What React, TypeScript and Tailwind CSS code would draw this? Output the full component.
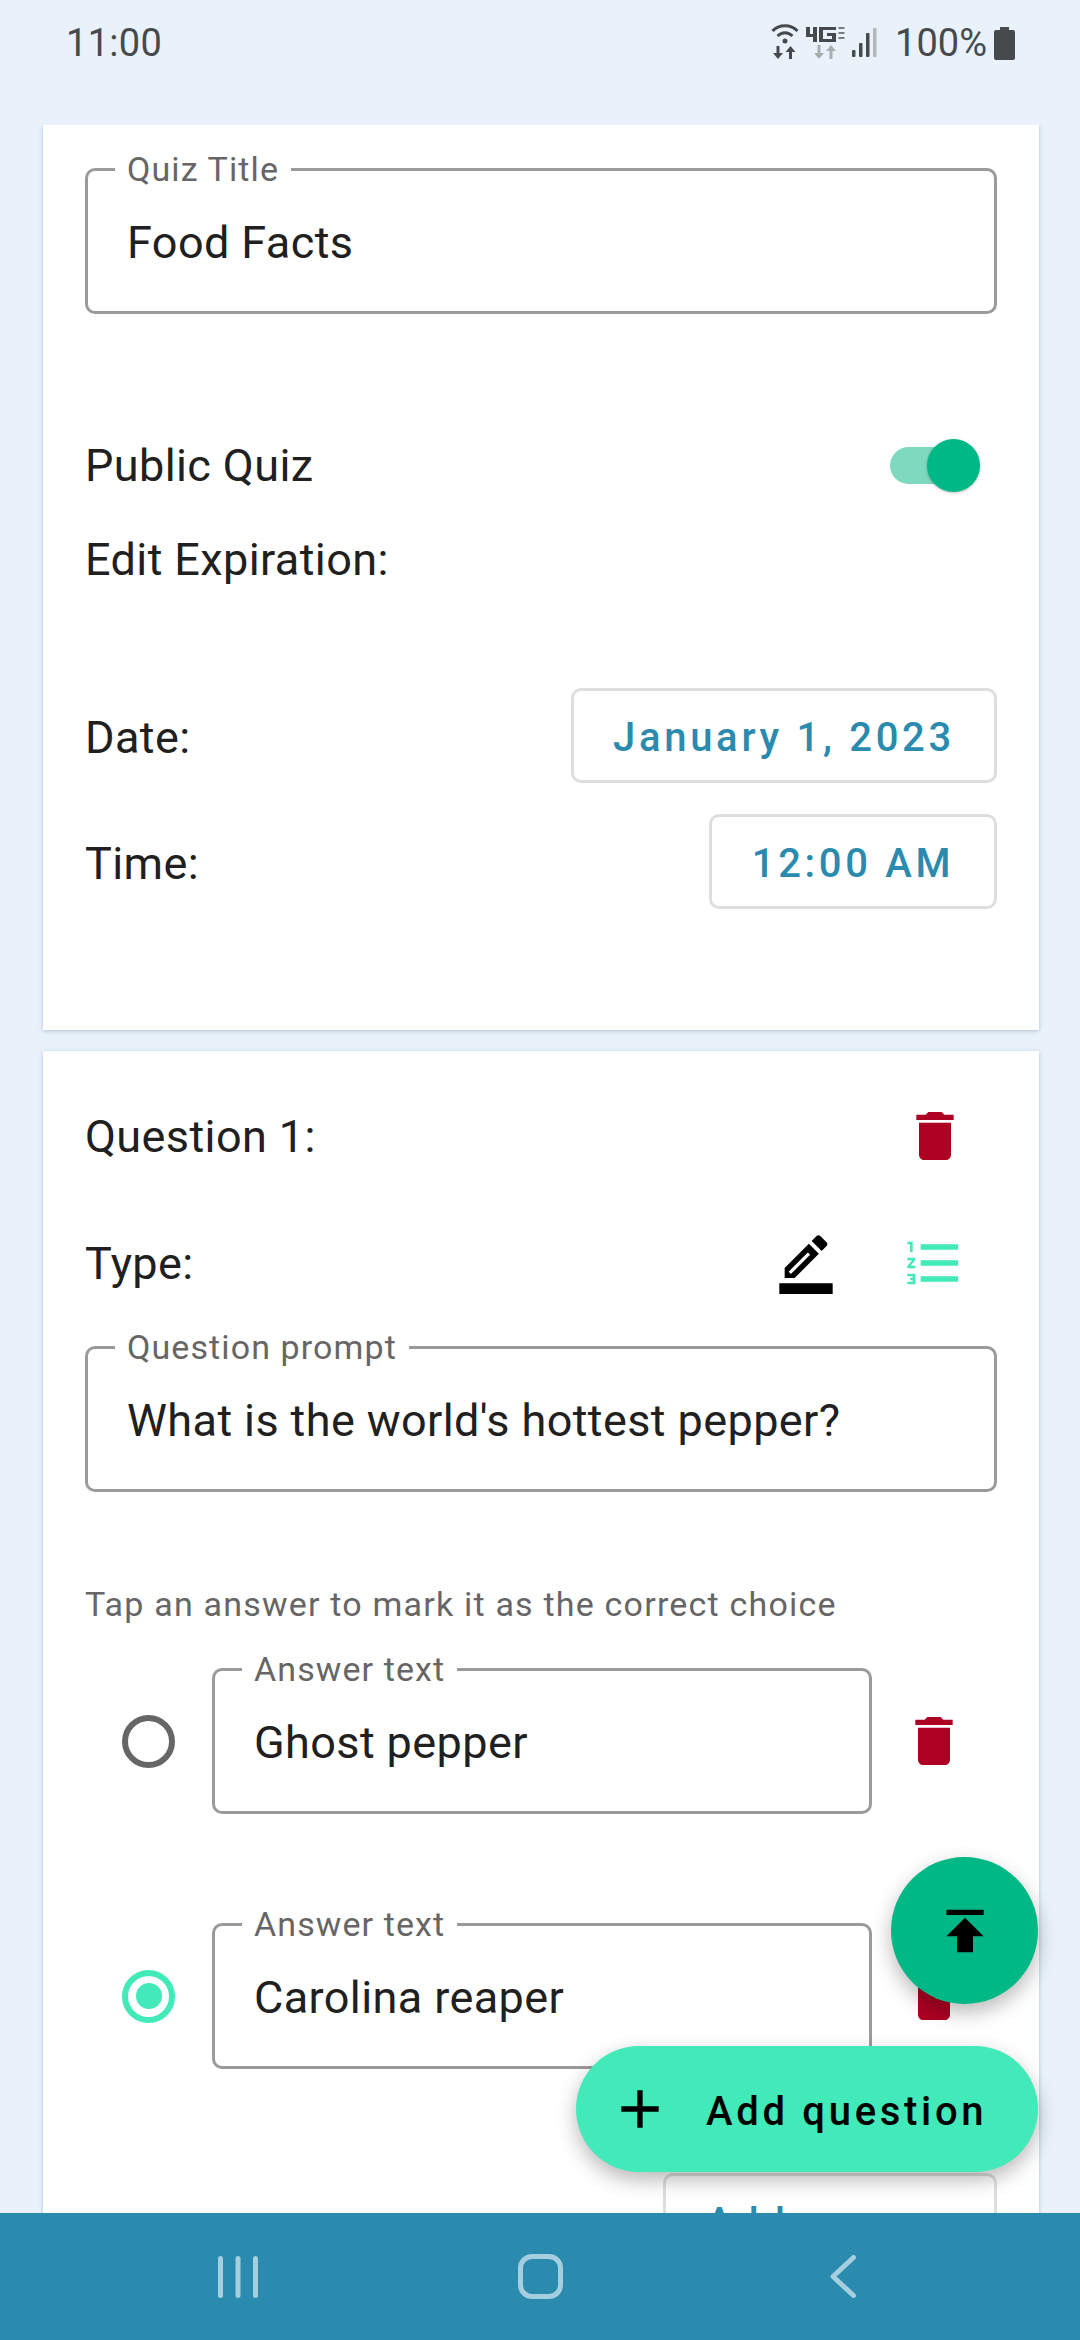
import React from 'react';

const TRASH = 'M6 19c0 1.1.9 2 2 2h8c1.1 0 2-.9 2-2V7H6v12zM19 4h-3.5l-1-1h-5l-1 1H5v2h14V4z';

const Icon: React.FC<{ d: string; className?: string }> = ({ d, className }) => (
  <svg viewBox="0 0 24 24" className={`w-[64px] h-[64px] shrink-0 fill-current ${className ?? ''}`}>
    <path d={d} />
  </svg>
);

// outlined text field with the label sitting in the notch
const OutlinedField: React.FC<{ label: string; value: string; className?: string }> = ({ label, value, className }) => (
  <div className={`relative h-[146px] border-[3px] border-[#9b9b9b] rounded-[10px] flex items-center pl-[39px] ${className ?? ''}`}>
    <span className="absolute left-[27px] top-[-22px] bg-white px-[12px] text-[34px] leading-[40px] tracking-[1.1px] text-[#666666]">{label}</span>
    <span className="text-[45px] leading-[56px] tracking-[0.4px] text-[#202020] pt-[3px]">{value}</span>
  </div>
);

const PickerButton: React.FC<{ text: string; className?: string }> = ({ text, className }) => (
  <button className={`h-[95px] pt-[5px] border-[3px] border-[#dedede] rounded-[10px] bg-white text-[#2a8baf] text-[40px] font-medium tracking-[3.7px] ${className ?? ''}`}>
    {text}
  </button>
);

const Radio: React.FC<{ checked?: boolean }> = ({ checked }) => (
  <div className={`w-[53px] h-[53px] rounded-full border-[6px] flex items-center justify-center shrink-0 ${checked ? 'border-[#41eab8]' : 'border-[#666666]'}`}>
    {checked && <div className="w-[26px] h-[26px] rounded-full bg-[#41eab8]" />}
  </div>
);

const AnswerRow: React.FC<{ value: string; checked?: boolean; className?: string }> = ({ value, checked, className }) => (
  <div className={`flex items-center pl-[79px] ${className ?? ''}`}>
    <Radio checked={checked} />
    <OutlinedField label="Answer text" value={value} className="ml-[37px] w-[660px]" />
    <Icon d={TRASH} className="ml-[30px] text-[#ad0022]" />
  </div>
);

const StatusIcons: React.FC = () => (
  <svg viewBox="0 0 110 40" className="w-[110px] h-[40px]">
    {/* wifi */}
    <g fill="none" stroke="#474a4c" strokeWidth="3">
      <path d="M1.500 8C8 1 20 1 26.500 8" />
      <path d="M6.500 13C11 8.500 17 8.500 21.500 13" />
    </g>
    <circle cx="14" cy="18" r="2.500" fill="#474a4c" />
    <path d="M5.500 23h3v7h3.500l-5 6-5-6h3.500zM18 36v-7h-3.500l5-6 5 6H21v7z" fill="#474a4c" />
    {/* 4G LTE */}
    <path d="M35 4h4v7h3V4h4v15h-4v-5h-7zM48 4h17v3H52v9h9v-3h-5v-3h9v9H48z" fill="#474a4c" />
    <path d="M67.500 4h6v2h-6zM67.500 9h6v2h-6zM67.500 14h6v2h-6z" fill="#7b7e80" />
    <path d="M46.500 22h3v8h3.500l-5 6-5-6h3.500zM58.500 36v-8H55l5-6 5 6h-3.500v8z" fill="#aaadae" />
    {/* signal */}
    <rect x="81" y="27" width="3.500" height="7" rx="1" fill="#474a4c" />
    <rect x="88" y="20" width="3.500" height="14" rx="1" fill="#474a4c" />
    <rect x="95" y="10" width="3.500" height="24" rx="1" fill="#474a4c" />
    <rect x="102" y="5" width="3.500" height="29" rx="1" fill="#b4b6b7" />
  </svg>
);

const App: React.FC = () => {
  return (
    <div className="relative w-[1080px] h-[2340px] overflow-hidden flex flex-col bg-[#e9f2fa] font-['Roboto',sans-serif] text-[#202020]">
      {/* status bar */}
      <div className="h-[125px] shrink-0 flex items-start justify-between pl-[66px] pr-[65px] pt-[21px] text-[#474a4c]">
        <span className="text-[38px] leading-[44px] tracking-[0.3px]">11:00</span>
        <div className="flex items-center">
          <StatusIcons />
          <span className="text-[38px] leading-[44px] ml-[14px]">100%</span>
          <svg viewBox="0 0 21 33" className="w-[21px] h-[33px] ml-[7px]">
            <path d="M6 0h9v3h4a2 2 0 0 1 2 2v26a2 2 0 0 1-2 2H2a2 2 0 0 1-2-2V5a2 2 0 0 1 2-2h4z" fill="#474a4c" />
          </svg>
        </div>
      </div>

      <div className="flex-1 overflow-hidden pl-[43px] pr-[41px]">
        {/* quiz settings card */}
        <div className="h-[905px] bg-white shadow-[0_1px_4px_rgba(70,100,130,0.35)] px-[42px] pt-[43px]">
          <OutlinedField label="Quiz Title" value="Food Facts" />
          <div className="flex items-center justify-between mt-[115px] h-[72px]">
            <span className="text-[45px] tracking-[0.4px] pt-[2px]">Public Quiz</span>
            <div className="relative w-[90px] h-[53px] mr-[17px] flex items-center">
              <div className="w-[74px] h-[37px] rounded-full bg-[#7fd9be]" />
              <div className="absolute right-0 top-0 w-[53px] h-[53px] rounded-full bg-[#00b886] shadow-[0_1px_3px_rgba(0,0,0,0.25)]" />
            </div>
          </div>
          <div className="text-[45px] leading-[56px] tracking-[0.4px] mt-[31px]">Edit Expiration:</div>
          <div className="flex items-center justify-between mt-[100px]">
            <span className="text-[45px] tracking-[0.4px] pt-[5px]">Date:</span>
            <PickerButton text="January 1, 2023" className="w-[426px]" />
          </div>
          <div className="flex items-center justify-between mt-[31px]">
            <span className="text-[45px] tracking-[0.4px] pt-[5px]">Time:</span>
            <PickerButton text="12:00 AM" className="w-[288px]" />
          </div>
        </div>

        {/* question card */}
        <div className="mt-[21px] bg-white shadow-[0_1px_4px_rgba(70,100,130,0.35)] pt-[53px] pb-[60px]">
          <div className="flex items-center justify-between pl-[42px] pr-[72px] h-[64px]">
            <span className="text-[45px] tracking-[0.4px] pt-[2px]">Question 1:</span>
            <Icon d={TRASH} className="text-[#ad0022]" />
          </div>
          <div className="flex items-center px-[42px] mt-[63px] h-[64px]">
            <span className="text-[45px] tracking-[0.4px] pt-[2px] flex-1">Type:</span>
            <svg viewBox="0 0 24 24" className="w-[64px] h-[64px] mt-[-3px] text-black fill-current">
              <path d="M22 24H2v-4h20v4zM13.06 5.19l3.75 3.75L7.75 18H4v-3.75l9.06-9.06zm4.82 2.68-3.750-3.750 1.830-1.830c.39-.39 1.020-.39 1.410 0l2.340 2.340c.39.39.39 1.020 0 1.410l-1.830 1.830z" />
              <path d="M5.900 16.100 13.100 8.900" stroke="#ffffff" strokeWidth="1.200" />
            </svg>
            <Icon d="M2 17h2v.5H3v1h1v.5H2v1h3v-4H2v1zm1-9h1V4H2v1h1v3zm-1 3h1.800L2 13.100v.9h3v-1H3.200L5 10.900V10H2v1zm5-6v2h14V5H7zm0 14h14v-2H7v2zm0-6h14v-2H7v2z" className="ml-[64px] mr-[31px] text-[#41eab8]" />
          </div>
          <div className="px-[42px] mt-[51px]">
            <OutlinedField label="Question prompt" value="What is the world's hottest pepper?" />
          </div>
          <div className="px-[42px] mt-[92px] text-[34px] leading-[40px] tracking-[1.2px] text-[#666666]">
            Tap an answer to mark it as the correct choice
          </div>
          <AnswerRow value="Ghost pepper" className="mt-[44px]" />
          <AnswerRow value="Carolina reaper" checked className="mt-[109px]" />
          <div className="flex justify-end px-[42px] mt-[104px]">
            <PickerButton text="Add answer" className="w-[334px]" />
          </div>
        </div>
      </div>

      {/* bottom nav */}
      <div className="h-[127px] shrink-0 bg-[#2a8baf] flex items-center pl-[218px]">
        <svg viewBox="0 0 40 42" className="w-[40px] h-[42px]">
          <rect x="0" y="0" width="5" height="42" rx="2.500" fill="#a5cfdf" />
          <rect x="17.500" y="0" width="5" height="42" rx="2.500" fill="#a5cfdf" />
          <rect x="35" y="0" width="5" height="42" rx="2.500" fill="#a5cfdf" />
        </svg>
        <div className="ml-[260px] w-[45px] h-[45px] rounded-[14px] border-[5px] border-[#a5cfdf]" />
        <svg viewBox="0 0 26 43" className="ml-[267px] w-[26px] h-[43px]">
          <path d="M23.500 2.500 3 21.500l20.500 19" fill="none" stroke="#a5cfdf" strokeWidth="5" strokeLinecap="round" strokeLinejoin="round" />
        </svg>
      </div>

      {/* floating buttons */}
      <button className="absolute left-[891px] top-[1857px] w-[147px] h-[147px] rounded-full bg-[#00b886] flex items-center justify-center shadow-[0_8px_20px_rgba(0,0,0,0.28)] text-black">
        <Icon d="M5 4v2h14V4H5zm0 10h4v6h6v-6h4l-7-7-7 7z" />
      </button>
      <button className="absolute left-[576px] top-[2046px] w-[462px] h-[126px] rounded-full bg-[#41eab8] flex items-center pl-[32px] shadow-[0_8px_20px_rgba(0,0,0,0.28)] text-black">
        <Icon d="M19 13h-6v6h-2v-6H5v-2h6V5h2v6h6v2z" />
        <span className="ml-[34px] pt-[5px] text-[40px] font-medium tracking-[3.7px]">Add question</span>
      </button>
    </div>
  );
};

export default App;
